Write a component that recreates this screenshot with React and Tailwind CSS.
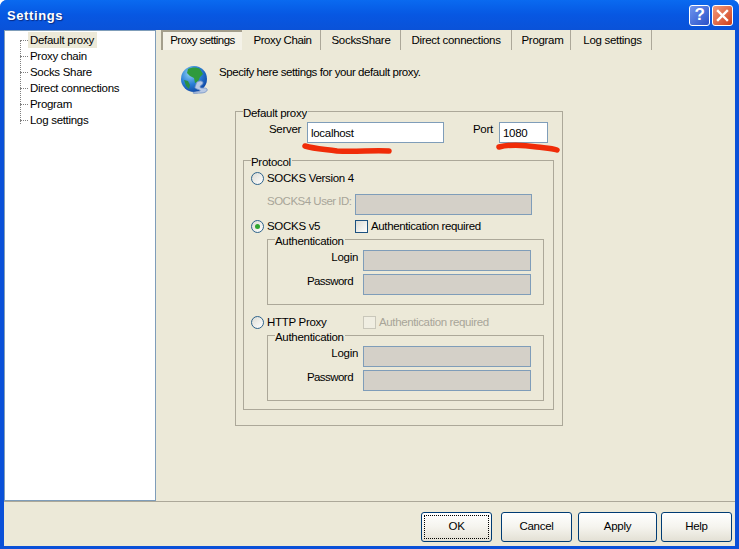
const TREE_ITEMS = ['Default proxy', 'Proxy chain', 'Socks Share', 'Direct connections', 'Program', 'Log settings'];

const TABS = [
  { label: 'Proxy settings', width: 'w-[81px] tracking-[-0.55px]', active: true },
  { label: 'Proxy Chain', width: 'w-[77px] pl-[1px] tracking-[-0.4px]' },
  { label: 'SocksShare', width: 'w-[80px] pl-[1px]' },
  { label: 'Direct connections', width: 'w-[111px]' },
  { label: 'Program', width: 'w-[59px] pl-[3px]' },
  { label: 'Log settings', width: 'w-[81px] pl-[3px]' },
];

function GroupBox({ title, className, children }) {
  return (
    <div className={`relative border border-[#aca899] ${className}`}>
      <span className="absolute -top-[6px] left-[7px] h-[14px] bg-[#ece9d8] pr-[1px] leading-[14px]">{title}</span>
      {children}
    </div>
  );
}

function Field({ className, value, disabled }) {
  return (
    <input
      readOnly
      disabled={disabled}
      defaultValue={value}
      className={`h-[21px] border border-[#7f9db9] px-[3px] text-black outline-none ${disabled ? 'bg-[#d4d0c8]' : 'bg-white'} ${className}`}
    />
  );
}

function Radio({ checked }) {
  return (
    <span className="flex h-[13px] w-[13px] shrink-0 items-center justify-center rounded-full border border-[#2c628b] bg-gradient-to-br from-[#dcdcd4] to-white">
      {checked && <span className="h-[5px] w-[5px] rounded-full bg-[#2fa52f]" />}
    </span>
  );
}

function Checkbox({ disabled }) {
  return (
    <span className={`h-[13px] w-[13px] shrink-0 border ${disabled ? 'border-[#c9c7ba] bg-[#f0eee2]' : 'border-[#1c5180] bg-gradient-to-br from-[#dcdcd4] to-white'}`} />
  );
}

function AuthBox({ className }) {
  return (
    <GroupBox title="Authentication" className={`ml-[23px] h-[66px] w-[277px] pt-[10px] ${className}`}>
      <div className="flex h-[21px]">
        <span className="ml-[50px] w-[40px] text-right leading-[14px]">Login</span>
        <Field disabled className="ml-[5px] w-[168px]" />
      </div>
      <div className="mt-[3px] flex h-[21px]">
        <span className="ml-[30px] w-[55px] text-right leading-[14px] tracking-[-0.55px]">Password</span>
        <Field disabled className="ml-[10px] w-[168px]" />
      </div>
    </GroupBox>
  );
}

function Globe() {
  return (
    <svg width="28" height="30" viewBox="0 0 28 30" className="shrink-0">
      <defs>
        <radialGradient id="sea" cx="0.35" cy="0.3" r="0.8">
          <stop offset="0" stopColor="#8fd0f5" />
          <stop offset="0.5" stopColor="#2a7fd6" />
          <stop offset="1" stopColor="#0b3f9e" />
        </radialGradient>
      </defs>
      <circle cx="13" cy="13" r="13" fill="url(#sea)" />
      <path d="M7 3c4-2 9-2 12 0l3 5-3 3-2 5-3 1-1-5-4-2-3-3z" fill="#2f9a3c" />
      <path d="M3 14l4 1 2 4-1 4-3-3z" fill="#2b8f45" />
      <path d="M16 16c3-2 6-1 6 1s-3 2-3 4 6 0 7 2-2 4-6 4-7 1-8 0 5-1 7-2-6-2-5-4 1-4 2-5z" fill="#b9c9e4" stroke="#6f8fc4" strokeWidth="0.8" />
    </svg>
  );
}

function Stroke({ className, width, d }) {
  return (
    <svg width={width} height="14" className={`pointer-events-none absolute ${className}`}>
      <path d={d} fill="none" stroke="#f02c08" strokeWidth="5.5" strokeLinecap="round" />
    </svg>
  );
}

function DialogButton({ label, className, focused }) {
  return (
    <button className={`relative h-[30px] rounded-[3px] border border-[#003c74] bg-gradient-to-b from-white via-[#f5f4ee] to-[#e3e0d4] text-black ${className}`}>
      {focused && <span className="absolute inset-[2px] border border-dotted border-black" />}
      {label}
    </button>
  );
}

export default function App() {
  return (
    <div className="flex h-[549px] w-[739px] flex-col overflow-hidden whitespace-nowrap rounded-t-[7px] bg-[#0a50d8] font-['Liberation_Sans',sans-serif] text-[11.5px] tracking-[-0.3px] text-black">
      <div className="flex h-[30px] shrink-0 items-center bg-gradient-to-b from-[#0a6af0] via-[#0757e2] to-[#0a52d8] pl-[7px] pr-[6px]">
        <span className="pt-[2px] text-[13px] font-bold tracking-[0.6px] text-white [text-shadow:1px_1px_1px_#0a2a80]">Settings</span>
        <div className="ml-auto flex gap-[2px]">
          <div className="flex h-[21px] w-[21px] items-center justify-center rounded-[3px] border border-white bg-gradient-to-br from-[#6f94ee] to-[#2a4fc8] text-[17px] font-bold text-white">?</div>
          <div className="flex h-[21px] w-[21px] items-center justify-center rounded-[3px] border border-white bg-gradient-to-br from-[#f09a7c] to-[#cf3a10]">
            <svg width="13" height="13" viewBox="0 0 13 13">
              <path d="M2 2l9 9M11 2l-9 9" stroke="#fff" strokeWidth="2.4" strokeLinecap="square" />
            </svg>
          </div>
        </div>
      </div>

      <div className="ml-[4px] mr-[4px] mb-[3px] flex min-h-0 flex-1 flex-col bg-[#ece9d8]">
        <div className="flex min-h-0 flex-1">
          <div className="relative w-[152px] shrink-0 border border-[#7f9db9] bg-white pt-[1px]">
            <div className="absolute left-[15px] top-[9px] h-[84px] border-l border-dotted border-[#808080]" />
            {TREE_ITEMS.map((item, i) => (
              <div key={item} className="flex h-[16px] items-center">
                <span className="ml-[15px] w-[8px] border-t border-dotted border-[#808080]" />
                <span className={`h-[16px] px-[2px] leading-[16px] ${i === 0 ? 'w-[69px] bg-[#ece9d8]' : ''}`}>{item}</span>
              </div>
            ))}
          </div>

          <div className="min-w-0 flex-1">
            <div className="flex pl-[5px]">
              {TABS.map((tab) => (
                <div
                  key={tab.label}
                  className={`flex h-[20px] items-center justify-center ${tab.width} ${tab.active ? 'mr-[2px] border-l-2 border-t-2 border-[#a39e8c] bg-[#f4f2e8]' : 'border-r border-[#aca899] pt-[1px]'}`}
                >
                  {tab.label}
                </div>
              ))}
            </div>

            <div className="ml-[25px] mt-[16px] flex">
              <Globe />
              <span className="ml-[10px] mt-[-1px] leading-[14px] tracking-[-0.42px]">Specify here settings for your default proxy.</span>
            </div>

            <GroupBox title="Default proxy" className="ml-[79px] mt-[15px] h-[315px] w-[328px] pt-[10px]">
              <div className="relative flex h-[21px]">
                <span className="ml-[33px] w-[38px] leading-[14px]">Server</span>
                <Field value="localhost" className="w-[137px]" />
                <span className="ml-[29px] w-[26px] leading-[14px]">Port</span>
                <Field value="1080" className="w-[49px]" />
                <Stroke width="94" className="left-[66px] top-[20px]" d="M3 4c10 3 18 3 32 5 20 1 36-1 52 0" />
                <Stroke width="66" className="left-[260px] top-[20px]" d="M3 5c12-3 25-2 38 0 7 1 14 1 20 3" />
              </div>

              <GroupBox title="Protocol" className="ml-[7px] mt-[17px] h-[250px] w-[311px] pt-[11px]">
                <div className="flex h-[13px] items-center pl-[7px]">
                  <Radio />
                  <span className="ml-[3px]">SOCKS Version 4</span>
                </div>
                <div className="mt-[9px] flex h-[21px] pl-[23px]">
                  <span className="w-[88px] leading-[14px] tracking-[-0.5px] text-[#a8a598]">SOCKS4 User ID:</span>
                  <Field disabled className="w-[177px]" />
                </div>
                <div className="mt-[5px] flex h-[13px] items-center pl-[7px]">
                  <Radio checked />
                  <span className="ml-[3px] w-[88px]">SOCKS v5</span>
                  <Checkbox />
                  <span className="ml-[3px] tracking-[-0.37px]">Authentication required</span>
                </div>
                <AuthBox className="mt-[6px]" />
                <div className="mt-[11px] flex h-[13px] items-center pl-[7px]">
                  <Radio />
                  <span className="ml-[3px] w-[96px]">HTTP Proxy</span>
                  <Checkbox disabled />
                  <span className="ml-[3px] tracking-[-0.37px] text-[#a8a598]">Authentication required</span>
                </div>
                <AuthBox className="mt-[6px]" />
              </GroupBox>
            </GroupBox>
          </div>
        </div>

        <div className="flex h-[45px] shrink-0 border-t border-[#aca899] pl-[417px] pt-[10px]">
          <DialogButton focused label="OK" className="w-[71px]" />
          <DialogButton label="Cancel" className="ml-[9px] w-[71px]" />
          <DialogButton label="Apply" className="ml-[6px] w-[79px]" />
          <DialogButton label="Help" className="ml-[4px] w-[71px]" />
        </div>
      </div>
    </div>
  );
}
